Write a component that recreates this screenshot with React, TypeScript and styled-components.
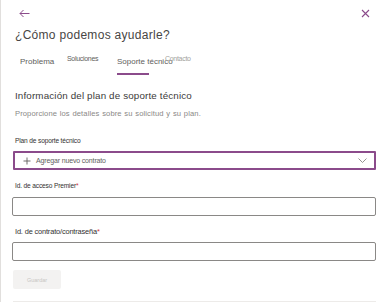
import React from 'react';
import styled, { createGlobalStyle } from 'styled-components';

const GlobalStyle = createGlobalStyle`
  html, body {
    margin: 0;
    padding: 0;
    background: #ffffff;
  }
  body {
    font-family: "Liberation Sans", Arial, sans-serif;
    color: #323130;
  }
`;

const PURPLE = '#8b4b8b';

const Panel = styled.div`
  position: relative;
  width: 387px;
  height: 302px;
  overflow: hidden;
  box-sizing: border-box;
  padding: 0 11px 0 12px;
  border-left: 1px solid #e1dfdd;
`;

const TopBar = styled.div`
  display: flex;
  justify-content: space-between;
  align-items: center;
  height: 26px;
  padding: 0 5px 0 5px;
`;

const IconButton = styled.button`
  display: flex;
  align-items: center;
  justify-content: center;
  background: none;
  border: none;
  padding: 0;
  width: 12px;
  height: 12px;
  cursor: pointer;
`;

const Title = styled.h1`
  margin: 0 0 0 2px;
  height: 18px;
  font-size: 12px;
  font-weight: 400;
  color: #484644;
  letter-spacing: 0.3px;
  line-height: 18px;
`;

const Tabs = styled.div`
  display: flex;
  align-items: flex-start;
  margin-top: 10px;
  padding-left: 7px;
  height: 23px;
`;

const Tab = styled.div<{ $active?: boolean; $w: number; $small?: boolean; $dim?: boolean }>`
  position: relative;
  width: ${p => p.$w}px;
  font-size: ${p => (p.$small ? 7 : 8)}px;
  margin-top: ${p => (p.$small ? 0 : 3)}px;
  white-space: nowrap;
  color: ${p => (p.$dim ? '#a19f9d' : '#605e5c')};
  letter-spacing: ${p => (p.$small ? -0.3 : 0)}px;
  line-height: 10px;

  &::after {
    content: '';
    display: ${p => (p.$active ? 'block' : 'none')};
    position: absolute;
    left: 0;
    top: 16px;
    width: 32px;
    height: 2px;
    background: ${PURPLE};
  }
`;

const Section = styled.section`
  margin-top: 12px;
  padding-left: 2px;
`;

const SectionTitle = styled.h2`
  margin: 0;
  font-size: 9.8px;
  font-weight: 400;
  color: #3b3a39;
  line-height: 14px;
  letter-spacing: 0.15px;
`;

const Description = styled.p`
  margin: 5px 0 0;
  font-size: 7.6px;
  color: #8a8886;
  line-height: 12px;
  letter-spacing: 0.1px;
  word-spacing: 0.5px;
`;

const Field = styled.div<{ $top: number }>`
  display: flex;
  flex-direction: column;
  margin-top: ${p => p.$top}px;
`;

const Label = styled.label<{ $size?: number }>`
  font-size: ${p => p.$size ?? 6.6}px;
  color: #323130;
  line-height: 11px;
  letter-spacing: -0.15px;
  margin: 0;
  height: 11px;
`;

const Required = styled.span`
  color: #d13438;
`;

const SelectBox = styled.div`
  display: flex;
  align-items: center;
  box-sizing: border-box;
  height: 19px;
  margin: 5px 0 0 -2px;
  border: 2px solid ${PURPLE};
  border-radius: 1px;
  padding: 0 7px 0 8px;
  font-size: 7px;
  color: #605e5c;
  letter-spacing: -0.15px;
`;

const SelectText = styled.span`
  flex: 1;
  margin-left: 5px;
`;

const Input = styled.input<{ $gap: number }>`
  box-sizing: border-box;
  height: 19px;
  margin: ${p => p.$gap}px 0 0 -3px;
  width: calc(100% + 3px);
  border: 1px solid #8a8886;
  border-radius: 2px;
  background: #fff;
  outline: none;
`;

const SaveButton = styled.button`
  margin: 9px 0 0 -2px;
  width: 48px;
  height: 19px;
  border: none;
  border-radius: 2px;
  background: #f3f2f1;
  color: #c8c6c4;
  font-family: inherit;
  font-size: 5.5px;
  padding: 0;
`;

const Divider = styled.div`
  margin: 12px 0 0 -2px;
  height: 1px;
  background: #edebe9;
`;

export default function App() {
  return (
    <>
      <GlobalStyle />
      <Panel>
        <TopBar>
          <IconButton aria-label="Atrás">
            <svg width="11" height="9" viewBox="0 0 11 9" fill="none" stroke={PURPLE} strokeWidth="1">
              <path d="M10.5 4.5H1M4.5 1L1 4.5L4.5 8" />
            </svg>
          </IconButton>
          <IconButton aria-label="Cerrar">
            <svg width="9" height="9" viewBox="0 0 9 9" fill="none" stroke={PURPLE} strokeWidth="1.1">
              <path d="M1 1L8 8M8 1L1 8" />
            </svg>
          </IconButton>
        </TopBar>
        <Title>¿Cómo podemos ayudarle?</Title>
        <Tabs>
          <Tab $w={47}>Problema</Tab>
          <Tab $w={50} $small>Soluciones</Tab>
          <Tab $w={48} $active>Soporte técnico</Tab>
          <Tab $w={40} $small $dim>Contacto</Tab>
        </Tabs>
        <Section>
          <SectionTitle>Información del plan de soporte técnico</SectionTitle>
          <Description>Proporcione los detalles sobre su solicitud y su plan.</Description>

          <Field $top={15}>
            <Label>Plan de soporte técnico</Label>
            <SelectBox>
              <svg width="8" height="8" viewBox="0 0 8 8" fill="none" stroke="#605e5c" strokeWidth="0.9">
                <path d="M4 0.5V7.5M0.5 4H7.5" />
              </svg>
              <SelectText>Agregar nuevo contrato</SelectText>
              <svg width="9" height="5" viewBox="0 0 9 5" fill="none" stroke="#8a8886" strokeWidth="0.9">
                <path d="M0.5 0.5L4.5 4.5L8.5 0.5" />
              </svg>
            </SelectBox>
          </Field>

          <Field $top={10}>
            <Label>
              Id. de acceso Premier<Required>*</Required>
            </Label>
            <Input $gap={6} />
          </Field>

          <Field $top={10}>
            <Label $size={7.4}>
              Id. de contrato/contraseña<Required>*</Required>
            </Label>
            <Input $gap={5} />
          </Field>

          <SaveButton disabled>Guardar</SaveButton>
          <Divider />
        </Section>
      </Panel>
    </>
  );
}
